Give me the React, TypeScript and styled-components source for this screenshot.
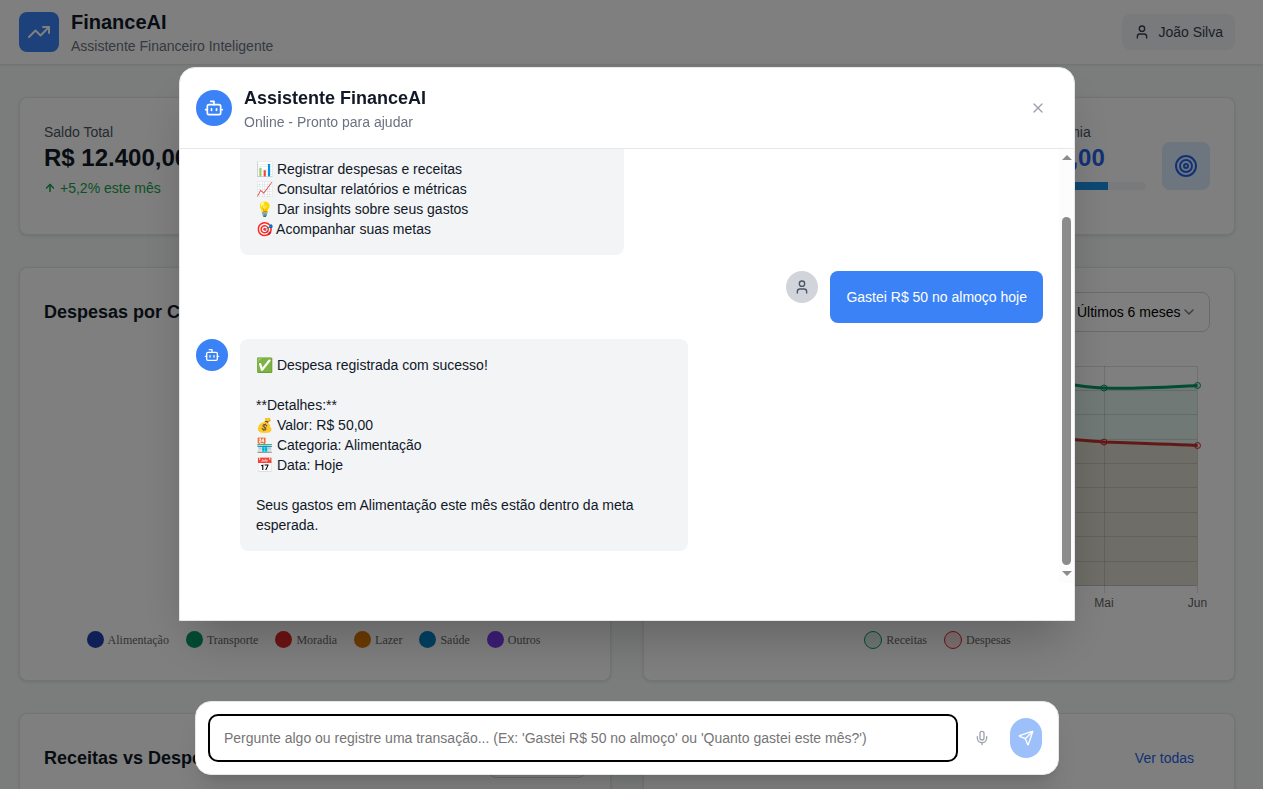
import React, { useEffect, useRef } from "react";
import styled, { createGlobalStyle, css } from "styled-components";
import {
  ArrowDown,
  ArrowUp,
  Bot,
  ChevronDown,
  Mic,
  Send,
  Target,
  TrendingUp,
  User,
  Wallet,
  X,
} from "lucide-react";

const GlobalStyle = createGlobalStyle`
  *, *::before, *::after { box-sizing: border-box; }
  body {
    margin: 0;
    overflow: hidden;
    background: #f5faf8;
    color: #111827;
    font-family: "Liberation Sans", Arial, sans-serif;
    font-size: 14px;
    line-height: 20px;
  }
  h1, h2, h3, p { margin: 0; }
  button, input, select { font: inherit; color: inherit; }
  button { border: 0; background: none; padding: 0; cursor: pointer; }
`;

const gutter = css`
  padding-right: 9px;
`;

const TopBar = styled.header`
  ${gutter}
  background: #ffffff;
  border-bottom: 1px solid #e5e7eb;
  box-shadow: 0 1px 2px rgba(0, 0, 0, 0.05);
`;

const TopBarInner = styled.div`
  display: flex;
  align-items: center;
  justify-content: space-between;
  max-width: 1216px;
  margin: 0 auto;
  padding: 8px 0;
`;

const Brand = styled.div`
  display: flex;
  align-items: center;
  gap: 12px;
`;

const BrandMark = styled.span`
  display: grid;
  place-items: center;
  width: 40px;
  height: 40px;
  border-radius: 8px;
  background: #3b82f6;
  color: #ffffff;
`;

const BrandName = styled.h1`
  font-size: 20px;
  line-height: 28px;
`;

const Muted = styled.p`
  color: #6b7280;
`;

const UserButton = styled.button`
  display: flex;
  align-items: center;
  gap: 8px;
  padding: 8px 12px;
  border-radius: 8px;
  background: #f3f4f6;
  color: #374151;
`;

const Content = styled.main`
  ${gutter}
  padding-top: 32px;
  padding-bottom: 32px;
`;

const ContentInner = styled.div`
  display: grid;
  gap: 32px;
  max-width: 1216px;
  margin: 0 auto;
`;

const CardGrid = styled.section<{ $columns: number; $gap?: number }>`
  display: grid;
  grid-template-columns: repeat(${(p) => p.$columns}, minmax(0, 1fr));
  gap: ${(p) => p.$gap ?? 32}px;
`;

const Card = styled.article`
  padding: 24px;
  border: 1px solid #e5e7eb;
  border-radius: 8px;
  background: #ffffff;
  box-shadow: 0 1px 3px rgba(0, 0, 0, 0.1);
`;

const StatRow = styled.div`
  display: flex;
  align-items: center;
  gap: 16px;
`;

const StatText = styled.div`
  flex: 1;
  min-width: 0;
`;

const StatLabel = styled.p`
  color: #4b5563;
`;

const StatValue = styled.p<{ $color?: string }>`
  font-size: 24px;
  line-height: 32px;
  font-weight: 700;
  white-space: nowrap;
  color: ${(p) => p.$color ?? "#111827"};
`;

const Trend = styled.p<{ $down?: boolean }>`
  display: flex;
  align-items: center;
  gap: 4px;
  margin-top: 4px;
  color: ${(p) => (p.$down ? "#dc2626" : "#16a34a")};
`;

const StatIcon = styled.span<{ $bg: string; $fg: string }>`
  display: grid;
  place-items: center;
  width: 48px;
  height: 48px;
  border-radius: 8px;
  background: ${(p) => p.$bg};
  color: ${(p) => p.$fg};
`;

const GoalTrack = styled.div`
  height: 8px;
  margin-top: 8px;
  border-radius: 4px;
  overflow: hidden;
  background: #f3f4f6;
`;

const GoalFill = styled.div`
  height: 100%;
  background: #1c92e8;
`;

const GoalNote = styled.p`
  margin-top: 4px;
  font-size: 12px;
  line-height: 16px;
  color: #6b7280;
`;

const CardHead = styled.div`
  display: flex;
  align-items: center;
  justify-content: space-between;
  height: 40px;
`;

const CardTitle = styled.h2`
  font-size: 18px;
  line-height: 28px;
`;

const SelectWrap = styled.label`
  position: relative;
  display: block;
  color: #111827;

  select {
    display: block;
    height: 40px;
    padding: 0 28px 0 12px;
    appearance: none;
    border: 1px solid #d1d5db;
    border-radius: 8px;
    background: transparent;
    color: #000000;
  }

  svg {
    position: absolute;
    right: 13px;
    top: 12px;
    color: #6b7280;
    pointer-events: none;
  }
`;

const TextLink = styled.a`
  padding: 10px 16px;
  color: #2563eb;
  text-decoration: none;
`;

const ChartBox = styled.div`
  display: flex;
  flex-direction: column;
  justify-content: flex-end;
  height: 300px;
  margin-top: 24px;

  > svg {
    display: block;
    width: 100%;
    height: 267px;
  }
`;

const Legend = styled.ul`
  display: flex;
  align-items: center;
  justify-content: center;
  gap: 17px;
  height: 33px;
  margin: 0;
  padding: 0 3px 0 0;
  list-style: none;
  font-family: "Liberation Serif", "Times New Roman", serif;
  font-size: 12px;
  line-height: 16px;
  color: #666666;
`;

const LegendItem = styled.li`
  display: flex;
  align-items: center;
  gap: 4px;
`;

const Dot = styled.span<{ $fill: string; $stroke?: string }>`
  width: ${(p) => (p.$stroke ? 18 : 17)}px;
  height: ${(p) => (p.$stroke ? 18 : 17)}px;
  border-radius: 50%;
  background: ${(p) => p.$fill};
  border: ${(p) => (p.$stroke ? `1px solid ${p.$stroke}` : "0")};
`;

const Overlay = styled.div`
  ${gutter}
  position: fixed;
  inset: 0;
  display: flex;
  flex-direction: column;
  align-items: center;
  gap: 80px;
  padding-top: 67px;
  padding-bottom: 14px;
  background: rgba(0, 0, 0, 0.5);
`;

const ChatPanel = styled.section`
  display: flex;
  flex-direction: column;
  flex: 1;
  min-height: 0;
  width: 100%;
  max-width: 896px;
  padding-bottom: 37px;
  border: 1px solid #e5e7eb;
  border-radius: 16px 16px 0 0;
  background: #ffffff;
  box-shadow: 0 25px 50px -12px rgba(0, 0, 0, 0.25);
`;

const ChatHead = styled.header`
  display: flex;
  align-items: center;
  gap: 12px;
  padding: 16px;
  border-bottom: 1px solid #e5e7eb;
`;

const ChatTitles = styled.div`
  flex: 1;
`;

const ChatTitle = styled.h2`
  font-size: 18px;
  line-height: 28px;
`;

const CloseButton = styled.button`
  display: grid;
  place-items: center;
  width: 32px;
  height: 32px;
  margin-right: 4px;
  color: #9ca3af;
`;

const Avatar = styled.span<{ $size: number; $user?: boolean }>`
  display: grid;
  place-items: center;
  flex: none;
  width: ${(p) => p.$size}px;
  height: ${(p) => p.$size}px;
  border-radius: 50%;
  background: ${(p) => (p.$user ? "#d1d5db" : "#3b82f6")};
  color: ${(p) => (p.$user ? "#4b5563" : "#ffffff")};
`;

const MessagesArea = styled.div`
  display: flex;
  flex: 1;
  min-height: 0;
`;

const Messages = styled.div`
  display: flex;
  flex-direction: column;
  flex: 1;
  gap: 16px;
  min-width: 0;
  padding: 16px;
  overflow-y: auto;
  scrollbar-width: none;
`;

const ScrollRail = styled.div`
  display: flex;
  flex-direction: column;
  align-items: center;
  justify-content: space-between;
  width: 15px;
  padding: 6px 0 7px;
  background: #fcfcfc;
`;

const ScrollArrow = styled.span<{ $down?: boolean }>`
  border: solid transparent;
  border-width: ${(p) => (p.$down ? "5px 5px 0" : "0 5px 5px")};
  border-${(p) => (p.$down ? "top" : "bottom")}-color: #8b8b8b;
`;

const ScrollTrack = styled.div`
  display: flex;
  flex: 1;
  align-items: flex-end;
  padding: 5px 0 6px;
`;

const ScrollThumb = styled.div`
  width: 9px;
  border-radius: 5px;
  background: #8b8b8b;
`;

const MessageRow = styled.div<{ $user?: boolean }>`
  display: flex;
  align-items: flex-start;
  justify-content: ${(p) => (p.$user ? "flex-end" : "flex-start")};
  gap: 12px;
`;

const Bubble = styled.p<{ $user?: boolean }>`
  max-width: 448px;
  padding: 16px;
  border-radius: 8px;
  white-space: pre-wrap;
  background: ${(p) => (p.$user ? "#3b82f6" : "#f3f4f6")};
  color: ${(p) => (p.$user ? "#ffffff" : "#111827")};
`;

const MessagesEnd = styled.div`
  flex: none;
`;

const Composer = styled.form`
  display: flex;
  align-items: center;
  width: 100%;
  max-width: 864px;
  padding: 12px 16px 12px 12px;
  border: 1px solid #e5e7eb;
  border-radius: 16px;
  background: #ffffff;
  box-shadow: 0 20px 25px -5px rgba(0, 0, 0, 0.1), 0 8px 10px -6px rgba(0, 0, 0, 0.1);
`;

const ComposerInput = styled.input`
  flex: 1;
  min-width: 0;
  height: 48px;
  padding: 0 14px;
  border: 2px solid #000000;
  border-radius: 10px;
  outline: none;
  background: #ffffff;

  &::placeholder {
    color: #757575;
    opacity: 1;
  }
`;

const MicButton = styled.button`
  display: grid;
  place-items: center;
  width: 24px;
  height: 40px;
  margin: 0 16px 0 12px;
  color: #9ca3af;
`;

const SendButton = styled.button`
  display: grid;
  place-items: center;
  width: 32px;
  height: 40px;
  border-radius: 16px;
  background: #9dc0fa;
  color: #ffffff;
`;

const categories = [
  { name: "Alimentação", color: "#1e40af" },
  { name: "Transporte", color: "#059669" },
  { name: "Moradia", color: "#dc2626" },
  { name: "Lazer", color: "#d97706" },
  { name: "Saúde", color: "#0284c7" },
  { name: "Outros", color: "#7c3aed" },
];

const months = [
  { name: "Jan", x: 63, income: 42, expense: 96 },
  { name: "Fev", x: 156, income: 34, expense: 88 },
  { name: "Mar", x: 249, income: 38, expense: 92 },
  { name: "Abr", x: 343, income: 22, expense: 80 },
  { name: "Mai", x: 436, income: 32, expense: 86 },
  { name: "Jun", x: 529.5, income: 29.5, expense: 89.5 },
];

const gridLines = [10, 34, 58, 83, 107, 131, 156, 180, 205];

const incomeCurve =
  "M63 42 C94 38 125 35 156 34 C187 33 218 41 249 38 C281 34 312 23 343 22 C374 21 402 31 436 32 C467 33 498 31 529.5 29.5";
const expenseCurve =
  "M63 96 C94 92 125 89 156 88 C187 87 218 94 249 92 C281 89 312 81 343 80 C374 80 405 84 436 86 C467 87 498 88 529.5 89.5";

function BalanceChart() {
  return (
    <svg viewBox="0 0 542 267" role="img" aria-label="Evolução de receitas e despesas">
      <g stroke="#000000" strokeOpacity="0.12">
        {gridLines.map((y) => (
          <path key={y} d={`M63 ${y + 0.5}H529`} />
        ))}
        {months.map((m) => (
          <path key={m.name} d={`M${Math.floor(m.x) + 0.5} 10V237`} />
        ))}
      </g>
      <path d="M63 229.5H529" stroke="#000000" strokeOpacity="0.25" />
      <path d={`${expenseCurve}V229H63Z`} fill="rgba(220,68,8,0.14)" />
      <path d={expenseCurve} fill="none" stroke="#dc2626" strokeWidth="3" />
      <path d={`${incomeCurve}V229H63Z`} fill="rgba(5,150,105,0.12)" />
      <path d={incomeCurve} fill="none" stroke="#059669" strokeWidth="3" />
      {months.map((m) => (
        <g key={m.name}>
          <circle cx={m.x} cy={m.expense} r="3" fill="rgba(220,38,38,0.1)" stroke="#dc2626" />
          <circle cx={m.x} cy={m.income} r="3" fill="rgba(5,150,105,0.1)" stroke="#059669" />
          <text x={m.x} y="251" textAnchor="middle" fontSize="12" fill="#666666">
            {m.name}
          </text>
        </g>
      ))}
    </svg>
  );
}

function Picker({ label, options }: { label: string; options: string[] }) {
  return (
    <SelectWrap>
      <select aria-label={label}>
        {options.map((o) => (
          <option key={o}>{o}</option>
        ))}
      </select>
      <ChevronDown size={16} />
    </SelectWrap>
  );
}

const greeting = `Olá! Sou seu assistente financeiro. Posso te ajudar com:

📊 Registrar despesas e receitas
📈 Consultar relatórios e métricas
💡 Dar insights sobre seus gastos
🎯 Acompanhar suas metas`;

const confirmation = `✅ Despesa registrada com sucesso!

**Detalhes:**
💰 Valor: R$ 50,00
🏪 Categoria: Alimentação
📅 Data: Hoje

Seus gastos em Alimentação este mês estão dentro da meta esperada.`;

export default function App() {
  const messagesRef = useRef<HTMLDivElement>(null);

  useEffect(() => {
    const list = messagesRef.current;
    if (list) list.scrollTop = list.scrollHeight;
  }, []);

  return (
    <>
      <GlobalStyle />
      <TopBar>
        <TopBarInner>
          <Brand>
            <BrandMark>
              <TrendingUp size={24} />
            </BrandMark>
            <div>
              <BrandName>FinanceAI</BrandName>
              <Muted>Assistente Financeiro Inteligente</Muted>
            </div>
          </Brand>
          <UserButton type="button">
            <User size={16} />
            João Silva
          </UserButton>
        </TopBarInner>
      </TopBar>

      <Content>
        <ContentInner>
          <CardGrid $columns={4} $gap={24}>
            <Card>
              <StatRow>
                <StatText>
                  <StatLabel>Saldo Total</StatLabel>
                  <StatValue>R$ 12.400,00</StatValue>
                  <Trend>
                    <ArrowUp size={12} strokeWidth={3} />
                    +5,2% este mês
                  </Trend>
                </StatText>
                <StatIcon $bg="#dcfce7" $fg="#16a34a">
                  <Wallet size={24} />
                </StatIcon>
              </StatRow>
            </Card>
            <Card>
              <StatLabel>Receitas</StatLabel>
              <StatValue $color="#16a34a">R$ 8.500,00</StatValue>
              <Trend>
                <ArrowUp size={12} strokeWidth={3} />
                +3,1% este mês
              </Trend>
            </Card>
            <Card>
              <StatLabel>Despesas</StatLabel>
              <StatValue $color="#dc2626">R$ 5.200,00</StatValue>
              <Trend $down>
                <ArrowDown size={12} strokeWidth={3} />
                -2,4% este mês
              </Trend>
            </Card>
            <Card>
              <StatRow>
                <StatText>
                  <StatLabel>Meta de Economia</StatLabel>
                  <StatValue $color="#2563eb">R$ 3.900,00</StatValue>
                  <GoalTrack>
                    <GoalFill style={{ width: "78%" }} />
                  </GoalTrack>
                  <GoalNote>78% da meta</GoalNote>
                </StatText>
                <StatIcon $bg="#dbeafe" $fg="#2563eb">
                  <Target size={24} />
                </StatIcon>
              </StatRow>
            </Card>
          </CardGrid>

          <CardGrid $columns={2}>
            <Card>
              <CardHead>
                <CardTitle>Despesas por Categoria</CardTitle>
              </CardHead>
              <ChartBox>
                <Legend>
                  {categories.map((c) => (
                    <LegendItem key={c.name}>
                      <Dot $fill={c.color} />
                      {c.name}
                    </LegendItem>
                  ))}
                </Legend>
              </ChartBox>
            </Card>
            <Card>
              <CardHead>
                <CardTitle>Evolução do Saldo</CardTitle>
                <Picker label="Período" options={["Últimos 6 meses"]} />
              </CardHead>
              <ChartBox>
                <BalanceChart />
                <Legend>
                  <LegendItem>
                    <Dot $fill="rgba(5,150,105,0.14)" $stroke="#059669" />
                    Receitas
                  </LegendItem>
                  <LegendItem>
                    <Dot $fill="rgba(220,38,38,0.14)" $stroke="#dc2626" />
                    Despesas
                  </LegendItem>
                </Legend>
              </ChartBox>
            </Card>
          </CardGrid>

          <CardGrid $columns={2}>
            <Card>
              <CardHead>
                <CardTitle>Receitas vs Despesas</CardTitle>
                <Picker label="Agrupamento" options={["Semanal"]} />
              </CardHead>
              <ChartBox />
            </Card>
            <Card>
              <CardHead>
                <CardTitle>Transações Recentes</CardTitle>
                <TextLink href="#transacoes">Ver todas</TextLink>
              </CardHead>
              <ChartBox />
            </Card>
          </CardGrid>
        </ContentInner>
      </Content>

      <Overlay>
        <ChatPanel role="dialog" aria-labelledby="chat-title">
          <ChatHead>
            <Avatar $size={36}>
              <Bot size={20} />
            </Avatar>
            <ChatTitles>
              <ChatTitle id="chat-title">Assistente FinanceAI</ChatTitle>
              <Muted>Online - Pronto para ajudar</Muted>
            </ChatTitles>
            <CloseButton type="button" aria-label="Fechar">
              <X size={16} />
            </CloseButton>
          </ChatHead>
          <MessagesArea>
            <Messages ref={messagesRef}>
              <MessageRow>
                <Avatar $size={32}>
                  <Bot size={16} />
                </Avatar>
                <Bubble>{greeting}</Bubble>
              </MessageRow>
              <MessageRow $user>
                <Avatar $size={32} $user>
                  <User size={16} />
                </Avatar>
                <Bubble $user>Gastei R$ 50 no almoço hoje</Bubble>
              </MessageRow>
              <MessageRow>
                <Avatar $size={32}>
                  <Bot size={16} />
                </Avatar>
                <Bubble>{confirmation}</Bubble>
              </MessageRow>
              <MessagesEnd />
            </Messages>
            <ScrollRail aria-hidden="true">
              <ScrollArrow />
              <ScrollTrack>
                <ScrollThumb style={{ height: "87%" }} />
              </ScrollTrack>
              <ScrollArrow $down />
            </ScrollRail>
          </MessagesArea>
        </ChatPanel>

        <Composer onSubmit={(e) => e.preventDefault()}>
          <ComposerInput
            type="text"
            aria-label="Mensagem"
            placeholder="Pergunte algo ou registre uma transação... (Ex: 'Gastei R$ 50 no almoço' ou 'Quanto gastei este mês?')"
          />
          <MicButton type="button" aria-label="Gravar áudio">
            <Mic size={16} />
          </MicButton>
          <SendButton type="submit" aria-label="Enviar">
            <Send size={16} />
          </SendButton>
        </Composer>
      </Overlay>
    </>
  );
}
